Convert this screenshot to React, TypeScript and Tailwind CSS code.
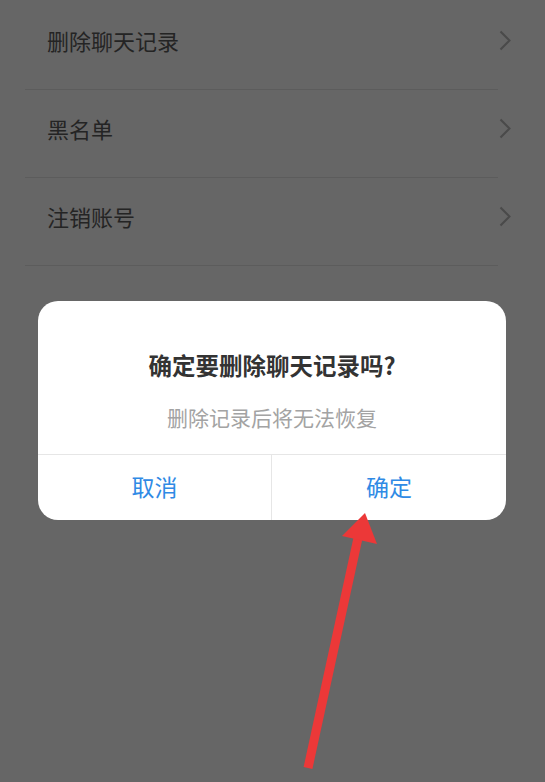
const rows = ["删除聊天记录", "黑名单", "注销账号"];

function Chevron() {
  return (
    <svg width="12" height="21" viewBox="0 0 12 21" fill="none" className="-mr-[13px]">
      <polyline points="1.5,1.5 10.5,10.5 1.5,19.5" stroke="#4a4a4a" strokeWidth="2" />
    </svg>
  );
}

export default function App() {
  return (
    <div
      className="relative h-[782px] w-full overflow-hidden bg-[#666666]"
      style={{ fontFamily: '"Noto Sans CJK SC", "Noto Sans", sans-serif' }}
    >
      {/* settings list (dimmed behind the modal) */}
      <div className="pl-[25px] pr-[47px] pt-[2px]">
        {rows.map((label) => (
          <div
            key={label}
            className="flex h-[88px] items-center justify-between border-b border-[#5c5c5c] pb-[11px] pl-[22px]"
          >
            <span className="text-[22px] leading-none text-[#242424]">{label}</span>
            <Chevron />
          </div>
        ))}
      </div>

      {/* confirm dialog */}
      <div className="absolute left-[38px] top-[301px] flex h-[219px] w-[468px] flex-col overflow-hidden rounded-[20px] bg-white">
        <div className="flex h-[153px] flex-col items-center pt-[48px]">
          <div className="text-[23.5px] font-bold leading-[32px] text-[#333333]">确定要删除聊天记录吗?</div>
          <div className="mt-[22px] text-[21px] leading-[28px] text-[#a3a3a3]">删除记录后将无法恢复</div>
        </div>
        <div className="grid flex-1 grid-cols-2 border-t border-[#e6e6e6]">
          <button className="flex items-center justify-center border-r border-[#e6e6e6] pb-[2px] text-[23px] text-[#2f8ae5]">
            取消
          </button>
          <button className="flex items-center justify-center pb-[2px] text-[23px] text-[#2f8ae5]">确定</button>
        </div>
      </div>

      {/* annotation arrow */}
      <svg className="pointer-events-none absolute inset-0" width="545" height="782" viewBox="0 0 545 782">
        <line x1="308" y1="768" x2="358" y2="538" stroke="#ec3838" strokeWidth="9" />
        <polygon points="365,513 342,536 377,544" fill="#ec3838" />
      </svg>
    </div>
  );
}
